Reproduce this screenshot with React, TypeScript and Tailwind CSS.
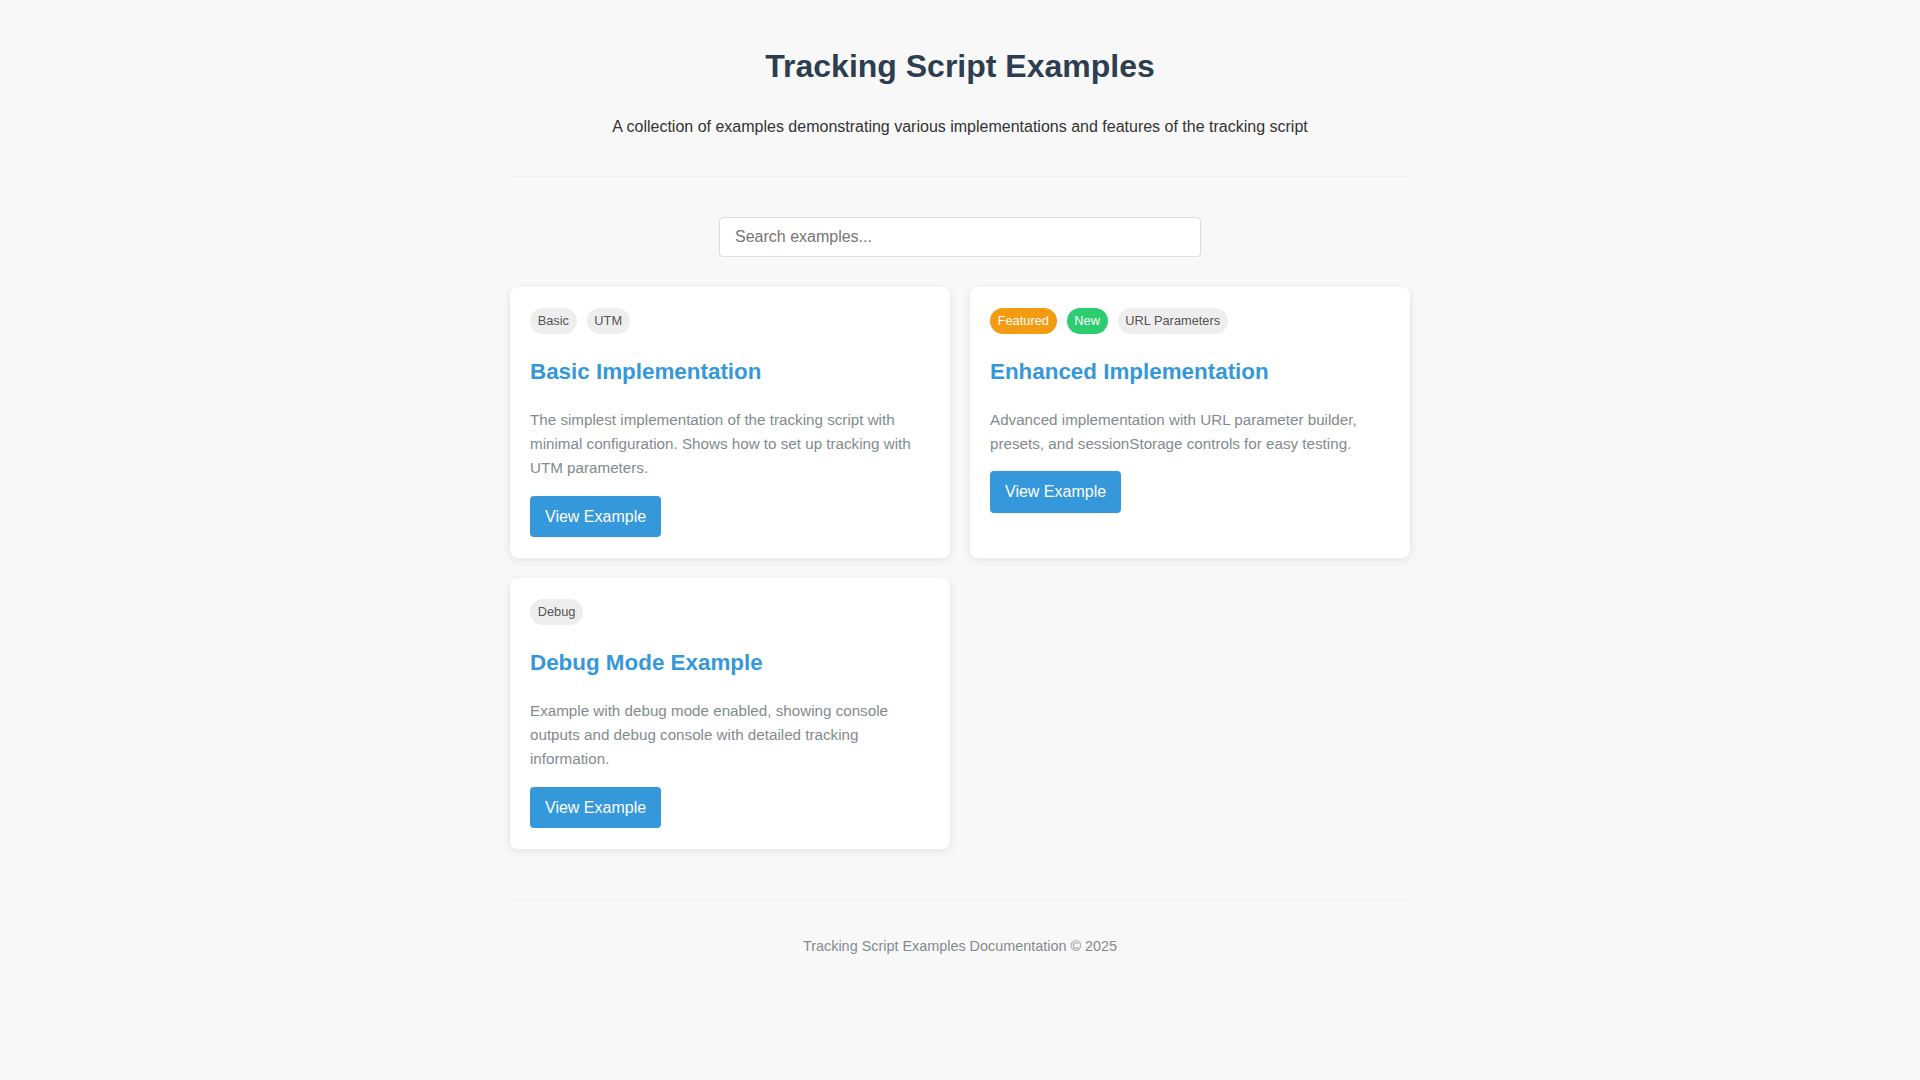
import { useState } from 'react';

type Badge = { label: string; tone: 'gray' | 'orange' | 'green' };

type Example = {
  title: string;
  description: string;
  badges: Badge[];
};

const examples: Example[] = [
  {
    title: 'Basic Implementation',
    description:
      'The simplest implementation of the tracking script with minimal configuration. Shows how to set up tracking with UTM parameters.',
    badges: [
      { label: 'Basic', tone: 'gray' },
      { label: 'UTM', tone: 'gray' },
    ],
  },
  {
    title: 'Enhanced Implementation',
    description:
      'Advanced implementation with URL parameter builder, presets, and sessionStorage controls for easy testing.',
    badges: [
      { label: 'Featured', tone: 'orange' },
      { label: 'New', tone: 'green' },
      { label: 'URL Parameters', tone: 'gray' },
    ],
  },
  {
    title: 'Debug Mode Example',
    description:
      'Example with debug mode enabled, showing console outputs and debug console with detailed tracking information.',
    badges: [{ label: 'Debug', tone: 'gray' }],
  },
];

const toneClasses: Record<Badge['tone'], string> = {
  gray: 'bg-[#eeeeee] text-[#555555]',
  orange: 'bg-[#f39c12] text-white',
  green: 'bg-[#2ecc71] text-white',
};

function ExampleCard({ example }: { example: Example }) {
  return (
    <div className="bg-white rounded-lg px-5 pt-5 pb-[21px] shadow-[0_2px_8px_rgba(0,0,0,0.09)]">
      <div className="flex gap-[10px] pt-px">
        {example.badges.map((badge) => (
          <span
            key={badge.label}
            className={`h-[25.6px] px-[7.7px] rounded-full text-[12.8px] leading-[25.6px] ${toneClasses[badge.tone]}`}
          >
            {badge.label}
          </span>
        ))}
      </div>
      <h3 className="mt-5 text-[22.4px] font-bold leading-[1.6] text-[#3498db]">{example.title}</h3>
      <p className="mt-[18px] text-[15.2px] leading-[1.6] text-[#7f8c8d]">{example.description}</p>
      <button className="mt-[15px] px-[15px] py-2 bg-[#3498db] text-white text-base leading-[1.6] rounded">
        View Example
      </button>
    </div>
  );
}

export default function App() {
  const [query, setQuery] = useState('');

  const filtered = examples.filter((ex) => {
    const q = query.toLowerCase();
    return (
      ex.title.toLowerCase().includes(q) ||
      ex.description.toLowerCase().includes(q) ||
      ex.badges.some((b) => b.label.toLowerCase().includes(q))
    );
  });

  return (
    <div className="min-h-screen bg-[#f8f8f8] font-['Liberation_Sans',Arial,sans-serif] leading-[1.6] text-[#333333]">
      <div className="max-w-[900px] mx-auto pt-[41px]">
        <header className="text-center border-b border-[#eeeeee] pb-[37px]">
          <h1 className="text-[32px] font-bold leading-[1.6] text-[#2c3e50]">Tracking Script Examples</h1>
          <p className="mt-[23px] text-base text-[#333333]">
            A collection of examples demonstrating various implementations and features of the tracking script
          </p>
        </header>

        <div className="mt-10 flex justify-center">
          <input
            type="text"
            value={query}
            onChange={(e) => setQuery(e.target.value)}
            placeholder="Search examples..."
            className="w-[482px] h-[40px] px-[15px] bg-white border border-[#dddddd] rounded text-base text-[#333333] placeholder:text-[#757575] outline-none"
          />
        </div>

        <div className="mt-[30px] grid grid-cols-2 gap-5 items-stretch">
          {filtered.map((ex) => (
            <ExampleCard key={ex.title} example={ex} />
          ))}
        </div>

        <footer className="mt-[51px] border-t border-[#eeeeee] pt-[34px] pb-10 text-center text-[14.4px] text-[#7f8c8d]">
          Tracking Script Examples Documentation © 2025
        </footer>
      </div>
    </div>
  );
}
